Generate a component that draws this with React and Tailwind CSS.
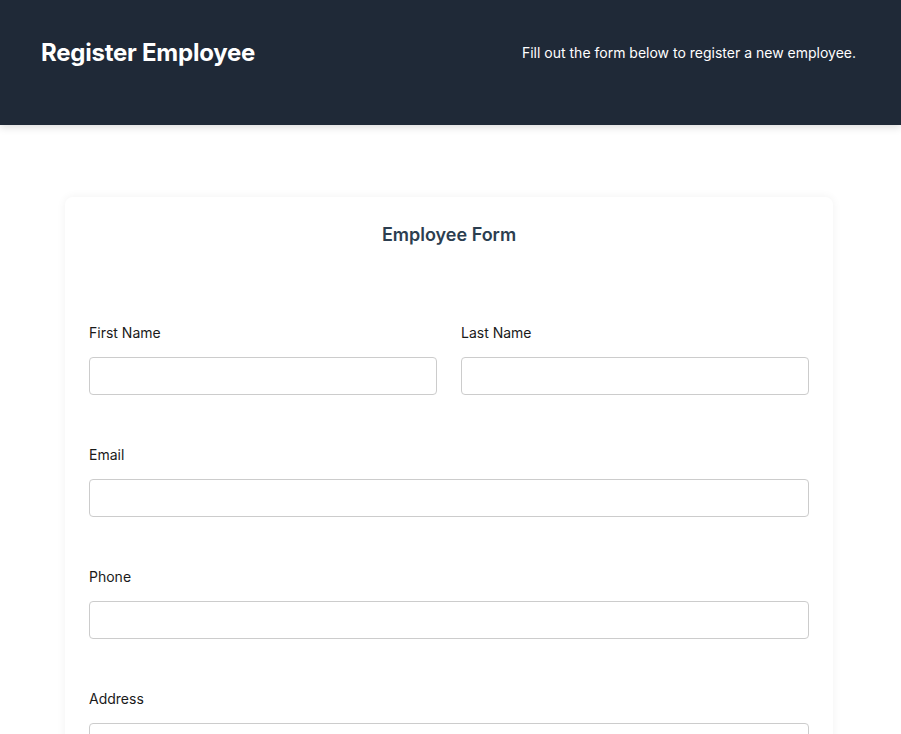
export default function App() {
  const Field = ({ label, type = 'text' }) => (
    <div className="flex flex-col">
      <label className="text-sm leading-5 text-[#1a1a1a] mb-[14px]">{label}</label>
      <input
        type={type}
        className="h-[38px] w-full rounded border border-[#cccccc] bg-white px-3 text-sm focus:outline-none"
      />
    </div>
  )

  return (
    <div className="min-h-screen bg-white font-['Inter',sans-serif] pr-[3px]">
      {/* Header */}
      <header className="-mr-[3px] h-[125px] bg-[#1f2937] shadow-[0_2px_8px_rgba(0,0,0,0.15)] pt-[37px] pl-[41px] pr-[45px]">
        <div className="h-8 flex items-center justify-between">
          <h1 className="text-2xl font-bold text-white tracking-[-0.01em]">Register Employee</h1>
          <p className="text-sm text-white">Fill out the form below to register a new employee.</p>
        </div>
      </header>

      {/* Card */}
      <div className="max-w-3xl mx-auto mt-[72px] bg-white rounded-lg shadow-[0_0_10px_rgba(0,0,0,0.06)] p-6">
        <h2 className="text-lg leading-7 font-semibold text-[#2c3e50] text-center">Employee Form</h2>
        <form className="mt-[74px] flex flex-col gap-[50px] pb-6">
          <div className="grid grid-cols-2 gap-6">
            <Field label="First Name" />
            <Field label="Last Name" />
          </div>
          <Field label="Email" type="email" />
          <Field label="Phone" type="tel" />
          <Field label="Address" />
        </form>
      </div>
    </div>
  )
}
